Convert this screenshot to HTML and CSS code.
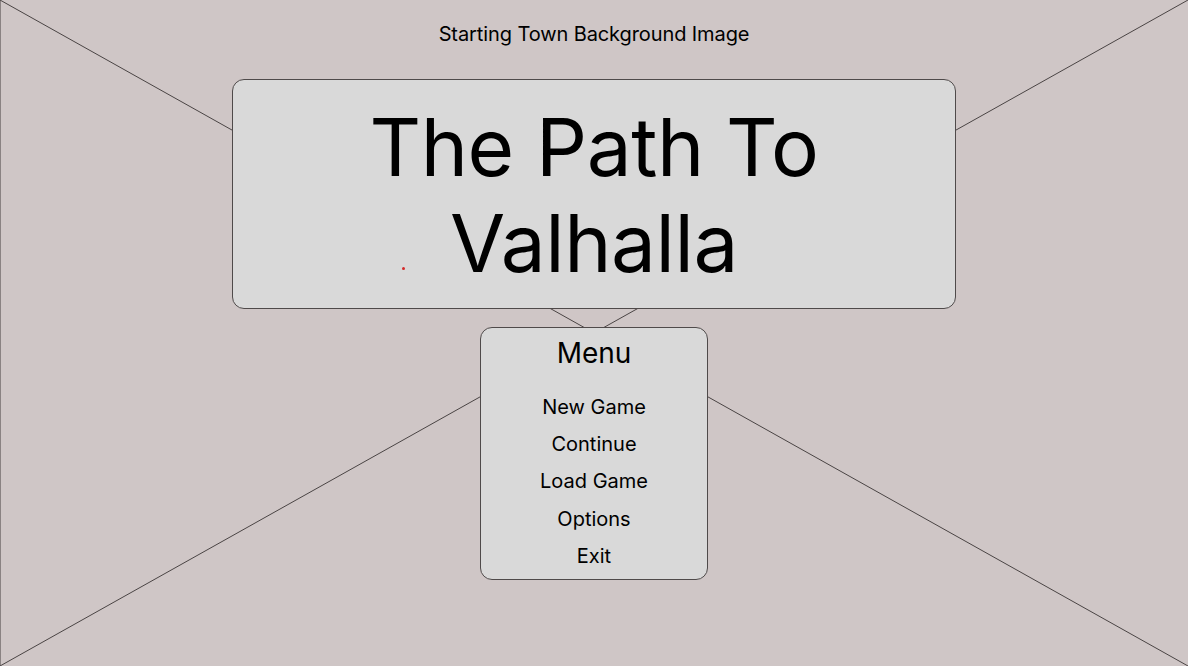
FILE: index.html
```html
<!DOCTYPE html>
<html lang="en">
<head>
<meta charset="utf-8">
<title>The Path To Valhalla</title>
<link rel="stylesheet" href="styles.css">
</head>
<body>
<div class="stage">
  <svg class="bg-cross" width="1188" height="666" viewBox="0 0 1188 666" aria-hidden="true">
    <line x1="0" y1="0" x2="1188" y2="666" stroke="#4a4444" stroke-width="1"/>
    <line x1="1188" y1="0" x2="0" y2="666" stroke="#4a4444" stroke-width="1"/>
  </svg>
  <div class="caption">Starting Town Background Image</div>
  <div class="title-box">
    <h1 class="title">The Path To<br>Valhalla</h1>
    <span class="dot"></span>
  </div>
  <div class="menu-box">
    <div class="menu-head">Menu</div>
    <ul class="menu-list">
      <li>New Game</li>
      <li>Continue</li>
      <li>Load Game</li>
      <li>Options</li>
      <li>Exit</li>
    </ul>
  </div>
</div>
</body>
</html>
```
FILE: styles.css
```css
* { box-sizing: border-box; }
html, body {
  margin: 0;
  padding: 0;
}
body {
  font-family: Inter, "Noto Sans", sans-serif;
  color: #000;
  background: #cfc6c6;
}
.stage {
  position: relative;
  width: 1188px;
  height: 666px;
  overflow: hidden;
  background: #cfc6c6;
  box-shadow: inset 1px 0 0 #8a8282;
  display: flex;
  flex-direction: column;
  align-items: center;
}
.bg-cross {
  position: absolute;
  left: 0;
  top: 0;
  z-index: 0;
}
.caption {
  position: relative;
  z-index: 1;
  margin-top: 22px;
  font-size: 20px;
  line-height: 24px;
  height: 24px;
  letter-spacing: -0.1px;
}
.title-box {
  position: relative;
  z-index: 1;
  margin-top: 33px;
  width: 724px;
  height: 230px;
  background: #d9d9d9;
  border: 1px solid #4f4a4a;
  border-radius: 12px;
  padding-top: 19px;
  text-align: center;
}
.title {
  margin: 0;
  font-weight: 400;
  font-size: 80px;
  line-height: 96px;
  letter-spacing: -0.4px;
}
.dot {
  position: absolute;
  left: 169px;
  top: 187px;
  width: 3px;
  height: 3px;
  border-radius: 50%;
  background: #d42a2a;
}
.menu-box {
  position: relative;
  z-index: 1;
  margin-top: 18px;
  width: 228px;
  height: 253px;
  background: #d9d9d9;
  border: 1px solid #4f4a4a;
  border-radius: 12px;
  padding-top: 8px;
  text-align: center;
}
.menu-head {
  font-size: 28px;
  line-height: 34px;
}
.menu-list {
  list-style: none;
  margin: 25px 0 0;
  padding: 0;
  display: flex;
  flex-direction: column;
  gap: 13.2px;
}
.menu-list li {
  font-size: 20px;
  line-height: 24px;
}
```
